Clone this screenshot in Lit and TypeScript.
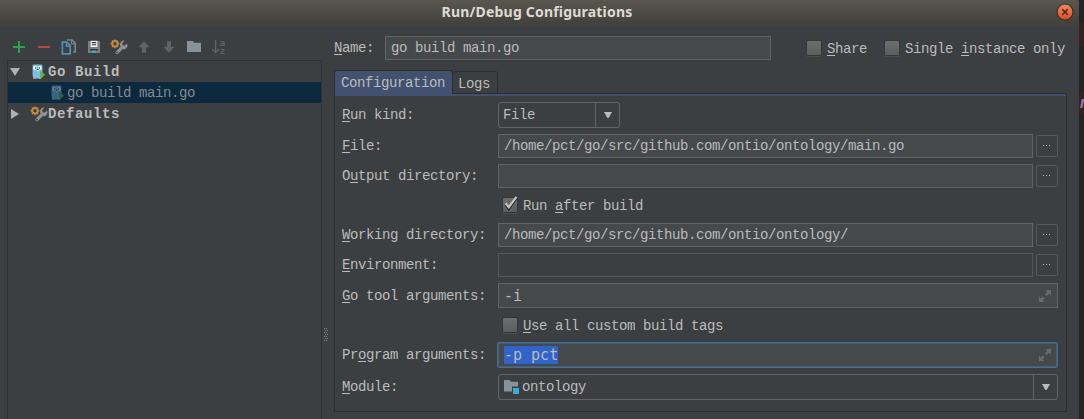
import { LitElement, html, svg, css, nothing } from 'lit';
import { customElement, property } from 'lit/decorators.js';

/** Splits "&Name" style captions into text with an underlined mnemonic. */
const mnemonic = (s: string) => {
  const i = s.indexOf('&');
  return i < 0
    ? html`<span>${s}</span>`
    : html`<span>${s.slice(0, i)}<span class="mn">${s[i + 1]}</span>${s.slice(i + 2)}</span>`;
};

const wrench = svg`
  <path d="M6 13.6 L11.4 8.2" stroke="#8f9193" stroke-width="3.2" stroke-linecap="round" fill="none"/>
  <path d="M13.6 1.6 a4 4 0 0 0 -4.4 5.4 l3.6 3.4 a4 4 0 0 0 3.2 -6 l-2.4 2.2 l-2 -.4 l-.3 -2z" fill="#8f9193"/>
  <circle cx="6" cy="13.6" r=".8" fill="#3c3f41"/>
  <circle cx="4" cy="4.8" r="2.7" fill="none" stroke="#c58a3f" stroke-width="2"/>
  <path d="M4 .4v1.6M4 7.6v1.6M-.4 4.8H1.2M6.8 4.8h1.6M.9 1.7l1.1 1.1M6 6.8l1.1 1.1M7.1 1.7l-1.1 1.1M2 6.8L.9 7.9" stroke="#c58a3f" stroke-width="1.4"/>`;

const gopher = svg`
  <circle cx="2.9" cy="2" r="1.4" fill="#6fb4dc"/><circle cx="10.1" cy="2" r="1.4" fill="#6fb4dc"/>
  <rect x="1.6" y=".4" width="9.8" height="14" rx="3.4" fill="#78c0ea"/>
  <rect x="2" y="13.4" width="2.4" height="1.4" fill="#c9b295"/><rect x="8" y="13.4" width="2.2" height="1.4" fill="#c9b295"/>
  <circle cx="4.2" cy="3.9" r="2" fill="#fff"/><circle cx="8.8" cy="3.9" r="2" fill="#fff"/>
  <circle cx="4.7" cy="4" r=".8" fill="#222"/><circle cx="8.3" cy="4" r=".8" fill="#222"/>
  <rect x="5.8" y="4.9" width="1.6" height="1.1" fill="#333"/><rect x="5.9" y="6" width="1.4" height="1.2" fill="#fff"/>
  <path d="M9.2 6.6 L14.2 10.8 L9.2 15z" fill="#5fb53a"/>`;

const icons: Record<string, unknown> = {
  add: svg`<path d="M8 2v12M2 8h12" stroke="#2fa14a" stroke-width="2"/>`,
  remove: svg`<path d="M2 8h12" stroke="#b9493b" stroke-width="2"/>`,
  copy: svg`<path d="M6 1h5l3.2 3.2V13H12" fill="none" stroke="#7f8183" stroke-width="1.7"/><path d="M10.4 .6v4.2h4" fill="none" stroke="#7f8183" stroke-width="1.2"/>
    <path d="M1.4 3.2h4.4l3.4 3.4v8.2H1.4z" fill="#3c3f41" stroke="#4d90b8" stroke-width="1.7"/><path d="M5.4 3v4.2h4" fill="none" stroke="#4d90b8" stroke-width="1.4"/>`,
  save: svg`<path d="M2 2h12v12H2z" fill="#7b7d7f"/><path d="M4.6 1.8h6.8v6.2H4.6z" fill="#f0f0f0"/><path d="M5.8 3.6h4.4M5.8 5.8h4.4" stroke="#333" stroke-width="1.1"/>
    <path d="M4 10h8v1.6H4z" fill="#35383a"/><path d="M6 11.6h4V14H6z" fill="#44a3cf"/>`,
  wrench,
  up: svg`<path d="M8 2.2 L13.8 8.2 H10V13.8H6V8.2H2.2z" fill="#606263"/>`,
  down: svg`<path d="M8 13.8 L13.8 7.8 H10V2.2H6V7.8H2.2z" fill="#606263"/>`,
  folder: svg`<path d="M1 2h5.8l1.4 1.8H15V13H1z" fill="#87939a"/>`,
  sort: svg`<path d="M4.6 1v12.4M1.4 10.2l3.2 3.4 3.2-3.4" fill="none" stroke="#606263" stroke-width="1.4"/>
    <text x="8.6" y="6.5" class="az">a</text><text x="8.6" y="14.8" class="az">z</text>`,
  gopher,
  module: svg`<path d="M1 1h5.4l1.4 1.8H15V7.6H9v4.8H1z" fill="#87939a"/><path d="M10 9h6v6h-6z" fill="#40a9d4"/>`,
  expand: svg`<path d="M8.6 2H14v5.4l-1.8-1.8-2.4 2.4-1.8-1.8 2.4-2.4z M2 8.6V14h5.4l-1.8-1.8 2-2-1.8-1.8-2 2z" fill="#686c6c"/>`,
  check: svg`<path d="M3.6 7.6l3.2 4.4L14.4 1.4" fill="none" stroke="#2b2b2b" stroke-width="2.4" transform="translate(0 1)"/>
    <path d="M3.6 7.2l3.2 3.9L14.4 .9" fill="none" stroke="#c4c4c4" stroke-width="2.2"/>`,
};

const icon = (name: string, cls = '') =>
  html`<svg class="icon ${cls}" width="16" height="16" viewBox="0 0 16 16">${icons[name]}</svg>`;

const shared = css`
  * { box-sizing: border-box; }
  .icon { display: block; flex: none; overflow: visible; }
  .mn { text-decoration: underline 1px; text-underline-offset: 2px; text-decoration-skip-ink: none; }
  .az { font: 700 9.5px/8px "DejaVu Sans Mono", monospace; fill: #606263; }
`;

@customElement('check-box')
class CheckBox extends LitElement {
  @property() label = '';
  @property({ type: Boolean }) checked = false;
  static styles = [shared, css`
    :host { display: flex; align-items: center; height: 22px; white-space: pre; }
    .box { width: 14px; height: 14px; margin-right: 6px; border-radius: 1px;
      background: linear-gradient(#6c6d6d, #5c5d5d); box-shadow: 0 0 0 1px #34373a, 0 1px 0 1px #4b4e50; flex: none; }
    .tick { margin: -2px 0 0 -1px; }
    .txt { padding-top: 1px; line-height: 16px; }
  `];
  render() {
    return html`<span class="box">${this.checked ? icon('check', 'tick') : nothing}</span><span class="txt">${mnemonic(this.label)}</span>`;
  }
}

@customElement('text-field')
class TextField extends LitElement {
  @property() value = '';
  @property({ type: Boolean }) disabled = false;
  @property({ type: Boolean }) expandable = false;
  @property({ type: Boolean, reflect: true }) focused = false;
  static styles = [shared, css`
    :host { display: flex; flex: 1; height: 24px; min-width: 0; }
    .field { flex: 1; display: flex; align-items: center; border: 1px solid #646464; background: #45494a;
      padding: 0 5px; white-space: pre; line-height: 16px; }
    .disabled { background: #3c3f41; border-color: #555758; }
    .mono { font: 15px/18px "DejaVu Sans Mono", monospace; letter-spacing: 0; padding-right: 4px; }
    .focused { border: 1px solid #466d94; box-shadow: inset 0 0 0 1px #435f7c; border-radius: 2px; padding-left: 6px; }
    .sel { background: #2f65ca; }
    .grow { flex: 1; }
  `];
  render() {
    const cls = `field ${this.disabled ? 'disabled' : ''} ${this.expandable ? 'mono' : ''} ${this.focused ? 'focused' : ''}`;
    return html`<div class=${cls}><span class=${this.focused ? 'sel' : ''}>${this.value}</span><span class="grow"></span>${this.expandable ? icon('expand') : nothing}</div>`;
  }
}

@customElement('combo-box')
class ComboBox extends LitElement {
  @property() value = '';
  @property() glyph = '';
  static styles = [shared, css`
    :host { display: flex; height: 26px; border: 1px solid #646464; border-radius: 3px; }
    .val { flex: 1; display: flex; align-items: center; padding-left: 4px; gap: 3px; line-height: 16px; }
    .arrow { width: 24px; border-left: 1px solid #646464; display: flex; align-items: center; justify-content: center; }
  `];
  render() {
    return html`<div class="val">${this.glyph ? icon(this.glyph) : nothing}<span>${this.value}</span></div>
      <div class="arrow"><svg width="8" height="6"><path d="M0 0h8L4.6 6H3.4z" fill="#bbb"/></svg></div>`;
  }
}

@customElement('app-root')
class AppRoot extends LitElement {
  static styles = [shared, css`
    :host { display: flex; width: 1084px; height: 419px; overflow: hidden; background: #232525;
      font: 14px/16px "Liberation Mono", monospace; letter-spacing: -0.4px; color: #bbb; }
    .window { width: 1079px; flex: none; display: flex; flex-direction: column; background: #3c3f41; }
    .title { height: 27px; flex: none; display: grid; grid-template-columns: 1fr auto 1fr; align-items: center;
      background: linear-gradient(#59574f, #3f3e39); border-radius: 0 3px 0 0; padding: 0 5px 3px 0; }
    .caption { font: 700 14px/20px "Noto Sans", sans-serif; letter-spacing: .2px; color: #dfdbd2; grid-column: 2; }
    .close { justify-self: end; display: block; }
    .main { flex: 1; display: flex; min-height: 0; }
    .left { width: 322px; flex: none; padding-left: 7px; display: flex; flex-direction: column; }
    .tools { height: 33px; display: flex; gap: 9px; padding: 12px 0 0 4px; }
    .tree { flex: 1; border: 1px solid #2f3234; border-bottom: 0; }
    .node { height: 21px; display: flex; align-items: center; white-space: pre; padding-left: 2px; }
    .bold { font-weight: 700; letter-spacing: .6px; }
    .bold .icon { margin-right: 1px; }
    .picked { background: #0d293e; color: #7f8b93; padding-left: 42px; }
    .picked .icon { margin-right: 1px; }
    .tri { width: 10px; height: 10px; margin-right: 11px; }
    .ghost { opacity: .4; }
    .grip { width: 12px; flex: none; padding: 301px 0 0 2px; }
    .right { width: 733px; flex: none; display: flex; flex-direction: column; }
    .head { display: flex; align-items: center; height: 24px; margin-top: 9px; white-space: pre; }
    .name { width: 51px; }
    .namefield { flex: none; width: 386px; }
    .share { margin-left: 36px; }
    .single { margin-left: 18px; }
    .tabs { display: flex; align-items: flex-end; height: 24px; margin-top: 10px; padding-right: 12px; flex-shrink: 0; }
    .tab { border: 1px solid #2b2d2f; border-bottom: 0; border-radius: 3px 3px 0 0; white-space: pre; flex: none; }
    .on { height: 24px; width: 119px; background: #435170; padding: 4px 0 0 6px; }
    .off { height: 23px; width: 45px; padding: 4px 0 0 5px; border-left: 0; border-bottom: 1px solid #2b2d2f; }
    .tabline { height: 1px; flex: 1; background: #2b2d2f; }
    .panel { height: 318px; flex: none; border: 1px solid #2b2d2f; border-top: 0; display: flex; flex-direction: column; gap: 6px;
      padding: 8px 8px 0 7px; box-shadow: inset 0 2px 0 #435170; }
    .tabs, .panel { width: 733px; }
    .tabs { padding-right: 0; }
    .row { display: flex; align-items: center; gap: 3px; flex: none; }
    .lbl { width: 156px; margin-right: -3px; white-space: pre; flex: none; }
    .kind { width: 122px; }
    .module { flex: 1; }
    .h25 { height: 25px; }
    .h26 { height: 26px; margin-left: -1px; }
    .check { padding-left: 161px; height: 22px; flex: none; }
    .tall { height: 23px; }
    .more { width: 22px; height: 22px; border: 1px solid #575a5c; border-radius: 2px; display: flex;
      align-items: center; justify-content: center; }
    .edge { flex: 1; padding-top: 23px; min-width: 0; overflow: hidden; }
    .mark { height: 23px; background: #352222; }
    .mark2 { margin-top: 46px; overflow: hidden; color: #9876aa; font: italic 700 15px/23px "DejaVu Sans Mono", monospace; }
  `];

  private row(label: string, control: unknown) {
    return html`<div class="row"><span class="lbl">${mnemonic(label)}</span>${control}</div>`;
  }
  private browse(label: string, value: string, disabled = false) {
    return this.row(label, html`<text-field .value=${value} ?disabled=${disabled}></text-field>
      <div class="more"><svg width="8" height="2"><path d="M0 0h1v1H0zM3 0h1v1H3zM6 0h1v1H6z" fill="#bbb"/></svg></div>`);
  }

  render() {
    const dots = Array.from({ length: 7 }, (_, i) => svg`<path d="M${i % 2} ${i * 2}h1v1h-1zM${2 + (i % 2)} ${i * 2}h1v1h-1z" fill="#8a8c8d"/>`);
    return html`
      <div class="window">
        <div class="title">
          <span class="caption">Run/Debug Configurations</span>
          <svg class="close" width="18" height="18" viewBox="0 0 18 18">
            <defs><linearGradient id="g" x2="0" y2="1"><stop stop-color="#f58a66"/><stop offset="1" stop-color="#de4a1b"/></linearGradient></defs>
            <circle cx="9" cy="9" r="8" fill="url(#g)" stroke="#33312c" stroke-width="1.2"/>
            <path d="M6.3 6.3l5.4 5.4M11.7 6.3l-5.4 5.4" stroke="#3c2a20" stroke-width="1.6"/>
          </svg>
        </div>
        <div class="main">
          <div class="left">
            <div class="tools">
              ${['add', 'remove', 'copy', 'save', 'wrench', 'up', 'down', 'folder', 'sort'].map((n) => icon(n))}
            </div>
            <div class="tree">
              <div class="node bold"><svg class="tri" viewBox="0 0 10 10"><path d="M0 1h10L5 9z" fill="#b0b0b0"/></svg>${icon('gopher')}<span>Go Build</span></div>
              <div class="node picked">${icon('gopher', 'ghost')}<span>go build main.go</span></div>
              <div class="node bold"><svg class="tri" viewBox="0 0 10 10"><path d="M1 0v10L9 5z" fill="#b0b0b0"/></svg>${icon('wrench')}<span>Defaults</span></div>
            </div>
          </div>
          <div class="grip"><svg width="5" height="14">${dots}</svg></div>
          <div class="right">
            <div class="head">
              <span class="name">${mnemonic('&Name:')}</span>
              <text-field class="namefield" value="go build main.go"></text-field>
              <check-box class="share" label="&Share"></check-box>
              <check-box class="single" label="Single &instance only"></check-box>
            </div>
            <div class="tabs"><div class="tab on">Configuration</div><div class="tab off">Logs</div><div class="tabline"></div></div>
            <div class="panel">
              ${this.row('&Run kind:', html`<combo-box class="kind" value="File"></combo-box>`)}
              ${this.browse('&File:', '/home/pct/go/src/github.com/ontio/ontology/main.go')}
              ${this.browse('O&utput directory:', '')}
              <div class="check tall"><check-box label="Run &after build" checked></check-box></div>
              ${this.browse('&Working directory:', '/home/pct/go/src/github.com/ontio/ontology/')}
              ${this.browse('&Environment:', '', true)}
              ${this.row('&Go tool arguments:', html`<text-field class="h25" value="-i" expandable></text-field>`)}
              <div class="check"><check-box label="&Use all custom build tags"></check-box></div>
              ${this.row('Pr&ogram arguments:', html`<text-field class="h26" value="-p pct" expandable focused></text-field>`)}
              ${this.row('&Module:', html`<combo-box class="module" value="ontology" glyph="module"></combo-box>`)}
            </div>
          </div>
        </div>
      </div>
      <div class="edge"><div class="mark"></div><div class="mark mark2">r</div></div>`;
  }
}
